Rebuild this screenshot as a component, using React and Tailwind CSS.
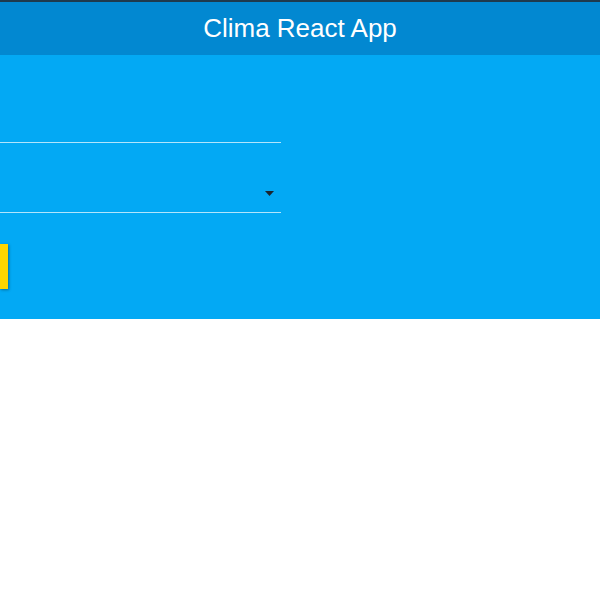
const App = () => {
  return (
    <div className="min-h-[600px] bg-white" style={{ fontFamily: '"Liberation Sans", Arial, sans-serif' }}>
      <header className="h-[55px] border-t-2 border-[#1f3a4d] bg-[#0288d1] flex items-center justify-center pb-[2px]">
        <h1 className="text-[26px] text-white leading-none">Clima React App</h1>
      </header>
      <section className="h-[264px] bg-[#03a9f4]">
        <form className="w-[281px] pt-[52px]">
          <div className="h-[36px] border-b border-[#b3e5fc]">
            <input className="w-full h-full bg-transparent outline-none text-white" type="text" />
          </div>
          <div className="mt-[33px] h-[37px] border-b border-[#b3e5fc] flex items-center justify-end pr-[7px]">
            <svg width="9" height="5" viewBox="0 0 9 5" className="mt-[-1px]">
              <path d="M0 0h9L4.5 5z" fill="#1a2530" />
            </svg>
          </div>
          <div className="mt-[31px] w-[8px] h-[45px] bg-[#ffd600] shadow-[1px_1px_3px_rgba(0,0,0,0.35)]"></div>
        </form>
      </section>
    </div>
  )
}

export default App
